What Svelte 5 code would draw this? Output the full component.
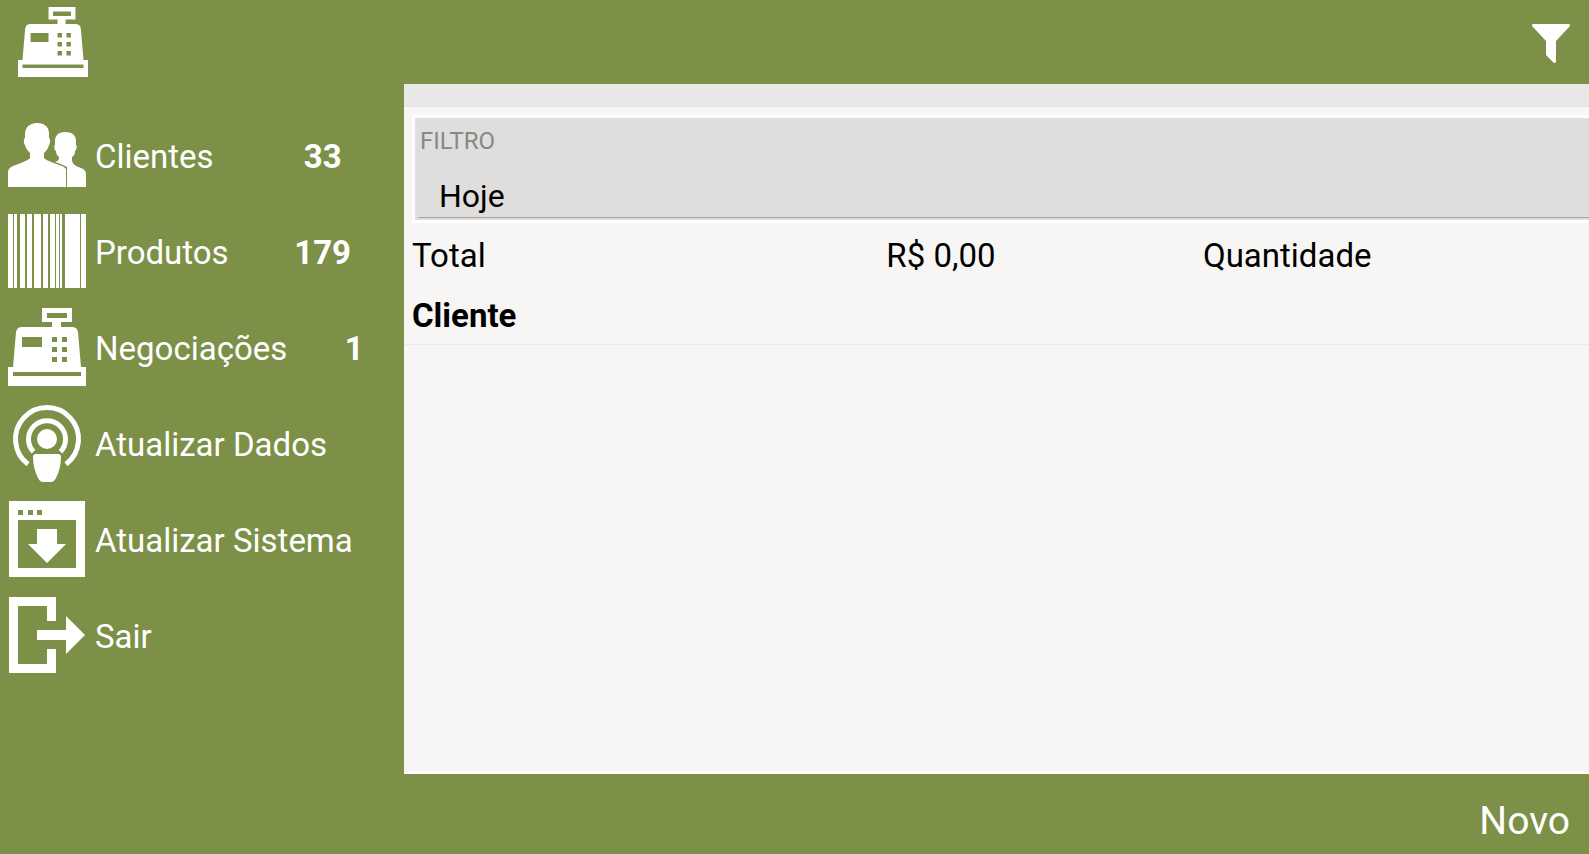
<script>
	let items = [
		{ id: 'clientes', label: 'Clientes', count: '           33' },
		{ id: 'produtos', label: 'Produtos', count: '        179' },
		{ id: 'negociacoes', label: 'Negociações', count: '       1' },
		{ id: 'dados', label: 'Atualizar Dados' },
		{ id: 'sistema', label: 'Atualizar Sistema' },
		{ id: 'sair', label: 'Sair' },
	];

	// [x, width] of each bar
	const bars = [
		[0, 5], [6, 3], [12, 5], [19, 5], [26, 7], [35, 5],
		[42, 5], [48, 3], [52, 2], [57, 15], [73, 5],
	];

	let filtro = $state('Hoje');
</script>

{#snippet icon(name)}
	<svg viewBox="0 0 78 78" aria-hidden="true">
		{#if name === 'clientes'}
			<path d="M29 7C21 7 17 12 17 18v4c-2 1-1 6 0 7 1 4 3 6 5 8v5c-2 3-10 5-17 8C1 52 0 54 0 57v14h58V53l-2-2c-5-3-16-5-20-9v-5c2-2 4-4 5-8 1-1 2-6 0-7v-4c0-7-4-11-12-11z" />
			<path d="M57 16c-7 0-10 4-10 9v4c-1 0-1 5 1 6 0 3 1 4 3 6v2c-1 2-2 2-4 3q7 2 12 5v20h19V58c0-3-2-5-5-6-5-2-8-3-9-7v-4c2-1 3-3 3-6 2-1 2-6 1-6v-4c0-6-4-9-11-9z" />
		{:else if name === 'produtos'}
			{#each bars as [x, width]}
				<rect {x} y="2" {width} height="74" />
			{/each}
		{:else if name === 'negociacoes'}
			<path fill-rule="evenodd" d="M34 0h30v14H53v5h11q5 0 6 5l3 35h5v19H0V59h5l3-35q1-5 6-5h30v-5H34zM39 5v5h20V5zM14 29v10h20V29zM44 29v5h5v-5zM54 29v5h5v-5zM44 39v5h5v-5zM54 39v5h5v-5zM44 49v5h5v-5zM54 49v5h5v-5zM5 64v4h68v-4z" />
		{:else if name === 'dados'}
			<g fill="none" stroke="currentColor" stroke-width="5">
				<path d="M20 60.200A31.500 31.500 0 1 1 58 60.200" />
				<path d="M25.500 47.800A18.500 18.500 0 1 1 52.500 47.800" />
			</g>
			<circle cx="39" cy="35" r="10" />
			<path d="M25 53q0-3 3-3h22q3 0 3 3c0 8-2 15-5 21q-2 4-5 4h-8q-3 0-5-4c-3-6-5-13-5-21z" />
		{:else if name === 'sistema'}
			<path fill-rule="evenodd" d="M1 1h76v76H1zM10 20v48h58V20zM10 10v5h5v-5zM20 10v5h5v-5zM29 10v5h5v-5z" />
			<path d="M29 29h20v15h9L39 63 20 44h9z" />
		{:else}
			<path d="M1 1h47v24h-9V10H10v58h29V53h9v24H1z" />
			<path d="M29 34h29V20l19 19-19 19V44H29z" />
		{/if}
	</svg>
{/snippet}

<div class="app">
	<header>
		<div class="logo">{@render icon('negociacoes')}</div>
		<button class="filter" aria-label="Filtrar">
			<svg viewBox="0 0 38 39" aria-hidden="true">
				<path d="M1.500 0h35Q39 0 37.500 2.500L24 17v20q0 3-2.500 1.500L14 31V17L.500 2.500Q-1 0 1.500 0z" />
			</svg>
		</button>
	</header>

	<div class="middle">
		<nav>
			{#each items as item (item.id)}
				<a href="#{item.id}">
					{@render icon(item.id)}
					<span class="label">{item.label}{#if item.count}<b>{item.count}</b>{/if}</span>
				</a>
			{/each}
		</nav>

		<main>
			<div class="strip"></div>
			<div class="field">
				<label for="filtro">FILTRO</label>
				<select id="filtro" bind:value={filtro}>
					<option>Hoje</option>
				</select>
			</div>
			<div class="row">
				<span>Total</span>
				<span>R$ 0,00</span>
				<span>Quantidade</span>
			</div>
			<div class="row heading">
				<span>Cliente</span>
			</div>
		</main>
	</div>

	<footer>
		<button>Novo</button>
	</footer>
</div>

<style>
	:global(body) {
		margin: 0;
	}

	.app {
		display: flex;
		flex-direction: column;
		min-height: 100vh;
		background: #7c9048;
		color: #fff;
		font-family: Roboto, "Liberation Sans", sans-serif;
		font-size: 33px;
		line-height: 40px;
	}

	svg {
		display: block;
		flex: none;
		fill: currentColor;
	}

	button {
		padding: 0;
		border: none;
		background: none;
		color: inherit;
		font: inherit;
		cursor: pointer;
	}

	header {
		display: flex;
		align-items: center;
		justify-content: space-between;
		height: 84px;
		padding: 0 19px 0 18px;
	}

	.logo {
		width: 70px;
	}

	.filter {
		padding-top: 2px;
	}

	.filter svg {
		width: 38px;
		height: 39px;
	}

	.middle {
		display: flex;
		flex: 1;
	}

	nav {
		flex: none;
		box-sizing: border-box;
		width: 404px;
		padding: 23px 0 0 8px;
	}

	nav a {
		display: flex;
		align-items: center;
		gap: 9px;
		height: 96px;
		color: inherit;
		text-decoration: none;
	}

	nav svg {
		width: 78px;
		height: 78px;
	}

	.label {
		padding-top: 4px;
		white-space: pre;
	}

	main {
		flex: 1;
		min-width: 0;
		background: #f7f6f4;
		border-bottom: 2px solid #fff;
		color: #000;
	}

	.strip {
		height: 22px;
		margin-bottom: 8px;
		background: #e8e8e6;
		border-bottom: 1px solid #e2e2e0;
	}

	.field {
		margin: 0 0 2px 8px;
		padding: 3px 0 2px 3px;
		border: 3px solid #fff;
		border-right: none;
		background: #dfdedc;
	}

	.field label {
		display: block;
		padding-left: 2px;
		color: #888;
		font-size: 24px;
		line-height: 40px;
	}

	select {
		display: block;
		width: 100%;
		height: 57px;
		padding: 14px 0 0 21px;
		border: none;
		border-bottom: 1px solid #a5a5a4;
		border-radius: 0;
		outline: none;
		appearance: none;
		background: none;
		color: inherit;
		font: inherit;
		font-size: 32px;
	}

	.row {
		display: grid;
		grid-template-columns: 403fr 269fr 328fr;
		align-items: center;
		box-sizing: border-box;
		height: 60px;
		padding: 2px 0 0 8px;
	}

	.heading {
		border-bottom: 1px solid #ebebe9;
		font-weight: bold;
	}

	footer {
		display: flex;
		align-items: center;
		justify-content: flex-end;
		height: 80px;
		padding: 0 19px;
	}

	footer button {
		padding-top: 14px;
		font-size: 39px;
	}
</style>
